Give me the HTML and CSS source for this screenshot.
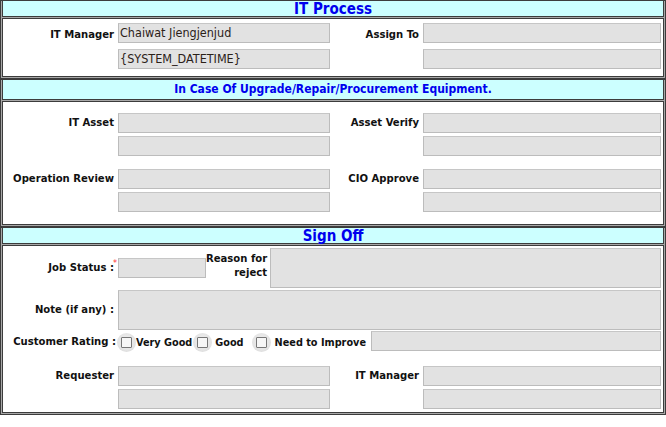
FILE: index.html
```html
<!DOCTYPE html>
<html>
<head>
<meta charset="utf-8">
<link rel="stylesheet" href="styles.css">
</head>
<body>
<div class="form">
  <section class="sec">
    <div class="hd hd-lg hd1">IT Process</div>
    <div class="bd bd1">
      <div class="grid4">
        <div class="lbl lbl-top">IT Manager</div>
        <div class="stack stack6">
          <div class="inp txt">Chaiwat Jiengjenjud</div>
          <div class="inp txt">{SYSTEM_DATETIME}</div>
        </div>
        <div class="lbl lbl-top">Assign To</div>
        <div class="stack stack6">
          <div class="inp"></div>
          <div class="inp"></div>
        </div>
      </div>
    </div>
  </section>

  <section class="sec">
    <div class="hd hd-sm hd2">In Case Of Upgrade/Repair/Procurement Equipment.</div>
    <div class="bd bd2">
      <div class="grid4">
        <div class="lbl">IT Asset</div>
        <div class="stack">
          <div class="inp"></div>
          <div class="inp"></div>
        </div>
        <div class="lbl">Asset Verify</div>
        <div class="stack">
          <div class="inp"></div>
          <div class="inp"></div>
        </div>
      </div>
      <div class="grid4">
        <div class="lbl">Operation Review</div>
        <div class="stack">
          <div class="inp"></div>
          <div class="inp"></div>
        </div>
        <div class="lbl">CIO Approve</div>
        <div class="stack">
          <div class="inp"></div>
          <div class="inp"></div>
        </div>
      </div>
    </div>
  </section>

  <section class="sec">
    <div class="hd hd-lg hd3">Sign Off</div>
    <div class="bd bd3">
      <div class="row-status">
        <div class="lbl lbl-mid">Job Status :<sup class="req">*</sup></div>
        <div class="inp inp-status"></div>
        <div class="lbl lbl-reason">Reason for<br>reject</div>
        <div class="inp area"></div>
      </div>
      <div class="row-note">
        <div class="lbl lbl-mid">Note (if any) :</div>
        <div class="inp area"></div>
      </div>
      <div class="row-rating">
        <div class="lbl lbl-rate">Customer Rating :</div>
        <span class="chk chk1"><span class="box"></span></span>
        <span class="opt opt1">Very Good</span>
        <span class="chk chk2"><span class="box"></span></span>
        <span class="opt opt2">Good</span>
        <span class="chk chk3"><span class="box"></span></span>
        <span class="opt opt3">Need to Improve</span>
        <div class="inp inp-rate"></div>
      </div>
      <div class="grid4 grid-sign">
        <div class="lbl">Requester</div>
        <div class="stack">
          <div class="inp"></div>
          <div class="inp"></div>
        </div>
        <div class="lbl">IT Manager</div>
        <div class="stack">
          <div class="inp"></div>
          <div class="inp"></div>
        </div>
      </div>
    </div>
  </section>
</div>
</body>
</html>
```

FILE: styles.css
```css
html, body {
  margin: 0;
  padding: 0;
  background: #ffffff;
}
body {
  font-family: "DejaVu Sans Condensed", "DejaVu Sans", sans-serif;
  color: #111111;
}
.form {
  width: 666px;
  display: flex;
  flex-direction: column;
}
.sec {
  border: 1px solid #3c3c3c;
  background: #a8a8a8;
  padding: 0 1px 1px 1px;
  display: flex;
  flex-direction: column;
  gap: 1px;
}
.hd {
  background: #ccffff;
  border-bottom: 1px solid #3c3c3c;
  border-left: 1px solid #3c3c3c;
  border-right: 1px solid #3c3c3c;
  color: #0000ee;
  font-weight: bold;
  text-align: center;
  box-sizing: border-box;
}
.hd-lg {
  font-size: 15px;
  line-height: 15px;
}
.hd1 {
  height: 16px;
  padding-top: 1px;
}
.hd3 {
  height: 16px;
  padding-top: 1px;
}
.hd-sm {
  font-size: 12px;
  line-height: 19px;
}
.hd2 {
  height: 20px;
}
.bd {
  background: #ffffff;
  border: 1px solid #3c3c3c;
}
.bd1 {
  padding: 4px 0 7px 0;
}
.bd2 {
  padding: 11px 0 12px 0;
  display: flex;
  flex-direction: column;
  gap: 13px;
}
.bd3 {
  padding: 2px 0 3px 0;
  display: flex;
  flex-direction: column;
}
.grid4 {
  display: grid;
  grid-template-columns: 115px 212px 93px 238px;
  align-items: start;
}
.lbl {
  font-weight: bold;
  font-size: 11.2px;
  line-height: 20px;
  text-align: right;
  padding-right: 4px;
  white-space: nowrap;
}
.lbl-top {
  padding-top: 2px;
}
.stack {
  display: flex;
  flex-direction: column;
  gap: 3px;
}
.stack6 {
  gap: 6px;
}
.inp {
  height: 20px;
  box-sizing: border-box;
  background: #e2e2e2;
  border: 1px solid #bcbcbc;
  border-top-color: #c6c6c6;
}
.txt {
  font-size: 12.5px;
  line-height: 18px;
  padding-left: 1px;
  color: #2b2118;
  white-space: nowrap;
}
.row-status {
  display: grid;
  grid-template-columns: 115px 88px 64px 391px;
  align-items: center;
}
.area {
  height: 40px;
}
.lbl-reason {
  line-height: 14px;
  padding-right: 3px;
  margin-top: -4px;
}
.lbl-mid {
  position: relative;
}
.req {
  color: #ff3333;
  font-size: 9px;
  font-weight: normal;
  position: absolute;
  right: 1px;
  top: -5px;
}
.row-note {
  margin-top: 2px;
  display: grid;
  grid-template-columns: 115px 543px;
  align-items: center;
}
.row-rating {
  margin-top: 1px;
  display: flex;
  align-items: center;
  height: 20px;
}
.lbl-rate {
  width: 115px;
  flex: none;
  box-sizing: border-box;
  padding-right: 2px;
  margin-top: 2px;
}
.chk {
  width: 19px;
  height: 19px;
  border-radius: 50%;
  background: radial-gradient(circle at 50% 45%, #f2f2f2 0%, #e4e4e4 60%, #d2d2d2 100%);
  display: flex;
  align-items: center;
  justify-content: center;
  flex: none;
  margin-top: 3px;
}
.box {
  width: 9px;
  height: 9px;
  border: 1px solid #777777;
  border-radius: 1px;
  background: #f6f6f6;
}
.opt {
  font-weight: bold;
  font-size: 10.8px;
  margin-top: 2px;
  white-space: nowrap;
}
.chk1 {
  margin-left: -1px;
}
.opt1 {
  margin-left: 0;
}
.chk2 {
  margin-left: 1px;
}
.opt2 {
  margin-left: 3px;
}
.chk3 {
  margin-left: 8px;
}
.opt3 {
  margin-left: 4px;
}
.inp-rate {
  margin-left: 5px;
  flex: 1;
  margin-right: 2px;
}
.grid-sign {
  margin-top: 15px;
}
```
